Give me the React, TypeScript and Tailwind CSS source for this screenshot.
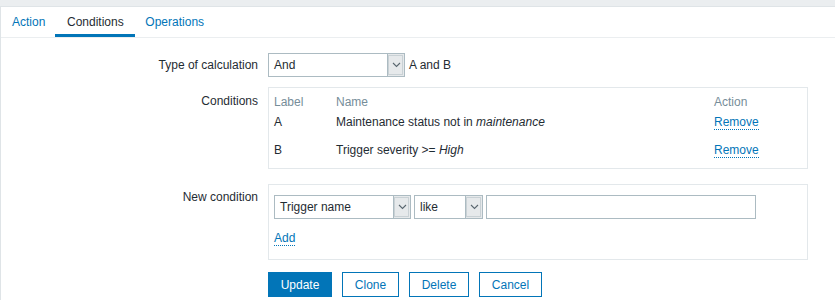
import React from "react";

const Chevron = () => (
  <svg width="9" height="6" viewBox="0 0 9 6" fill="none">
    <path d="M1 1 L4.5 4.5 L8 1" stroke="#5a6770" strokeWidth="1.1" />
  </svg>
);

const Select = ({ value, width }: { value: string; width: number }) => (
  <div
    className="flex h-[24px] border border-[#acbbc2] bg-white"
    style={{ width }}
  >
    <div className="flex-1 pl-[5px] leading-[22px] text-[#1f2c33]">{value}</div>
    <div className="flex w-[17px] items-center justify-center border-l border-[#acbbc2] bg-[#e6e9eb] outline outline-1 -outline-offset-2 outline-[#c9d1d5]">
      <Chevron />
    </div>
  </div>
);

const Link = ({ children }: { children: React.ReactNode }) => (
  <span className="border-b border-dotted border-[#0275b8] leading-[14px] text-[#0275b8]">
    {children}
  </span>
);

export default function App() {
  return (
    <div
      className="h-[300px] w-[835px] overflow-hidden bg-[#ebeef0] text-[12px] text-[#1f2c33]"
      style={{ fontFamily: '"Liberation Sans", Arial, sans-serif' }}
    >
      <div className="mt-[6px] h-[294px] border-l border-t border-[#dfe4e7] bg-white">
        {/* Tabs */}
        <div className="flex h-[31px] border-b border-[#ebeef0] pl-[1px]">
          <div className="flex h-full items-center px-[10px] text-[#0275b8]">Action</div>
          <div className="flex h-full w-[80px] items-center justify-center border-b-[3px] border-[#0275b8] pt-[3px] text-[#1f2c33]">
            Conditions
          </div>
          <div className="flex h-full items-center px-[10px] text-[#0275b8]">Operations</div>
        </div>

        {/* Form */}
        <div className="pt-[15px]">
          {/* Type of calculation */}
          <div className="flex items-center">
            <div className="w-[257px] text-right">Type of calculation</div>
            <div className="ml-[10px] flex items-center">
              <Select value="And" width={137} />
              <span className="ml-[4px]">A and B</span>
            </div>
          </div>

          {/* Conditions */}
          <div className="mt-[10px] flex">
            <div className="w-[257px] pt-[5px] text-right">Conditions</div>
            <div className="ml-[10px] h-[82px] w-[540px] border border-[#e3e8eb] px-[5px] pt-[5px]">
              <div className="flex h-[18px] items-center text-[#768d99]">
                <div className="w-[62px]">Label</div>
                <div className="w-[378px]">Name</div>
                <div>Action</div>
              </div>
              <div className="flex h-[22px] items-center">
                <div className="w-[62px]">A</div>
                <div className="w-[378px]">
                  Maintenance status not in <i>maintenance</i>
                </div>
                <div>
                  <Link>Remove</Link>
                </div>
              </div>
              <div className="mt-[6px] flex h-[22px] items-center">
                <div className="w-[62px]">B</div>
                <div className="w-[378px]">
                  Trigger severity &gt;= <i>High</i>
                </div>
                <div>
                  <Link>Remove</Link>
                </div>
              </div>
            </div>
          </div>

          {/* New condition */}
          <div className="mt-[15px] flex">
            <div className="w-[257px] pt-[4px] text-right">New condition</div>
            <div className="ml-[10px] h-[76px] w-[540px] border border-[#e3e8eb] px-[5px] pt-[10px]">
              <div className="flex gap-[3px]">
                <Select value="Trigger name" width={137} />
                <Select value="like" width={69} />
                <div className="h-[24px] w-[270px] border border-[#acbbc2] bg-white" />
              </div>
              <div className="mt-[10px]">
                <Link>Add</Link>
              </div>
            </div>
          </div>

          {/* Buttons */}
          <div className="mt-[12px] flex gap-[10px] pl-[267px]">
            <button className="h-[25px] w-[64px] bg-[#0275b8] text-white">Update</button>
            <button className="h-[25px] w-[57px] border border-[#0275b8] bg-white text-[#0275b8]">Clone</button>
            <button className="h-[25px] w-[60px] border border-[#0275b8] bg-white text-[#0275b8]">Delete</button>
            <button className="h-[25px] w-[63px] border border-[#0275b8] bg-white text-[#0275b8]">Cancel</button>
          </div>
        </div>
      </div>
    </div>
  );
}
